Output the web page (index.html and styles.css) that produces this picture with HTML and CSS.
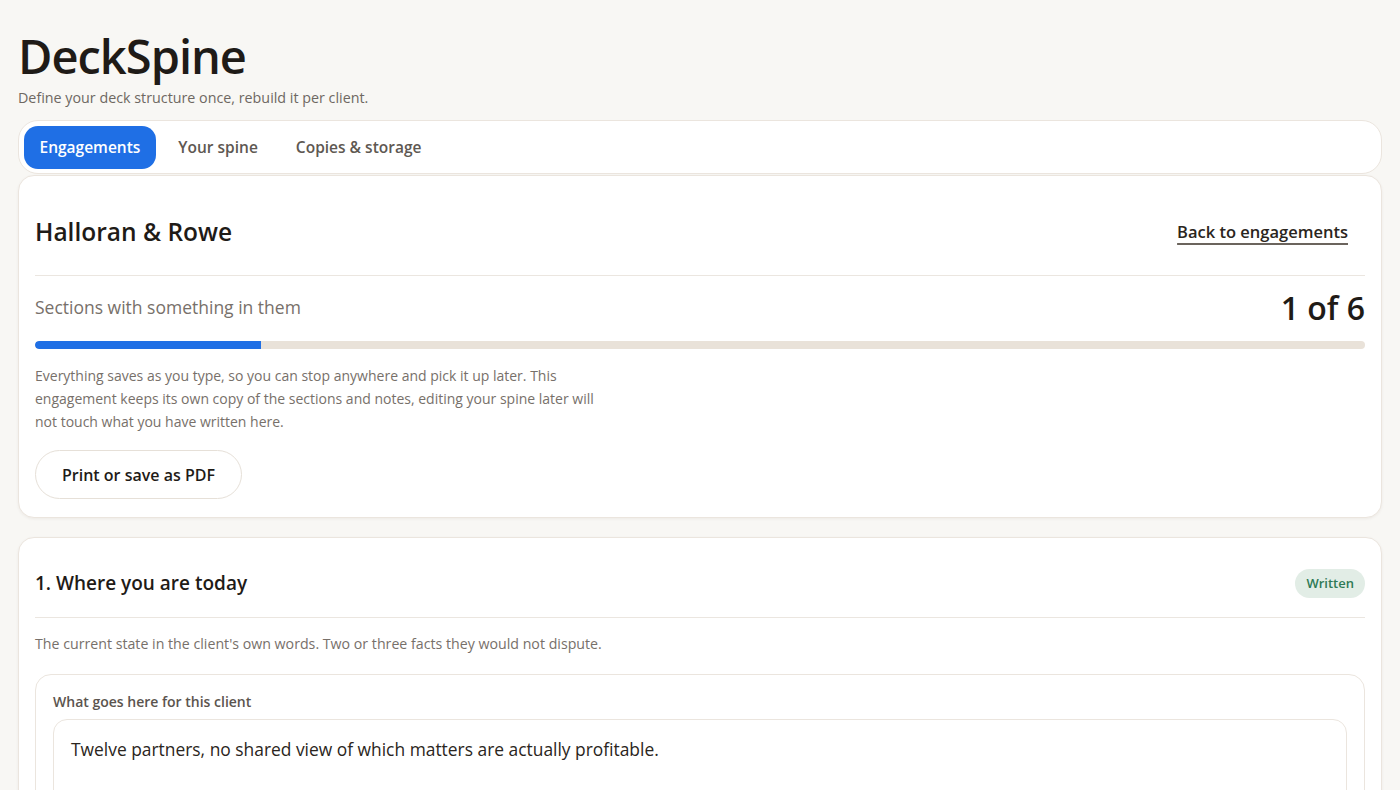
FILE: index.html
```html
<!DOCTYPE html>
<html>
  <head>
    <meta charset="UTF-8">
    <title>DeckSpine</title>
    <link rel="stylesheet" href="styles.css">
  </head>
  <body>
    <header class="masthead">
      <h1>DeckSpine</h1>
      <p class="tagline">Define your deck structure once, rebuild it per client.</p>
    </header>

    <nav class="tabs">
      <a class="tab active" href="#">Engagements</a>
      <a class="tab" href="#">Your spine</a>
      <a class="tab" href="#">Copies &amp; storage</a>
    </nav>

    <section class="card">
      <div class="card-head">
        <h2 class="client-name">Halloran &amp; Rowe</h2>
        <a class="back-link" href="#">Back to engagements</a>
      </div>

      <div class="progress-row">
        <span class="progress-label">Sections with something in them</span>
        <span class="progress-count">1 of 6</span>
      </div>
      <div class="progress-track">
        <div class="progress-fill" style="width: 17%"></div>
      </div>

      <p class="note">Everything saves as you type, so you can stop anywhere and pick it up later. This engagement keeps its own copy of the sections and notes, editing your spine later will not touch what you have written here.</p>

      <button class="pill-btn">Print or save as PDF</button>
    </section>

    <section class="card section-card">
      <div class="card-head section-head">
        <h3 class="section-title">1. Where you are today</h3>
        <span class="badge">Written</span>
      </div>
      <p class="section-desc">The current state in the client's own words. Two or three facts they would not dispute.</p>

      <div class="field-box">
        <label class="field-label" for="today">What goes here for this client</label>
        <textarea id="today" class="field-input" rows="4">Twelve partners, no shared view of which matters are actually profitable.</textarea>
      </div>
    </section>
  </body>
</html>
```

FILE: styles.css
```css
/* Page base */
body {
  margin: 0;
  padding: 18px 18px 40px;
  background-color: #f8f7f4;
  color: #1f1b17;
  font-family: "Open Sans", "Lato", sans-serif;
}

/* Title block */
.masthead h1 {
  margin: 0;
  padding-top: 10px;
  font-size: 47px;
  line-height: 56px;
  font-weight: 600;
  letter-spacing: -1px;
  color: #1f1b17;
}

.tagline {
  margin: 4px 0 0;
  font-size: 14.3px;
  line-height: 20px;
  color: #6e6862;
}

/* Tab bar */
.tabs {
  display: flex;
  gap: 6px;
  margin-top: 12px;
  padding: 4.5px;
  background-color: #fff;
  border: 1px solid #ebe5de;
  border-radius: 20px;
}

.tab {
  display: block;
  padding: 0 16px;
  height: 43px;
  line-height: 43px;
  border-radius: 14px;
  font-size: 15.5px;
  font-weight: 600;
  color: #5e5852;
  text-decoration: none;
}

.tab.active {
  background-color: #1f6fe5;
  color: #fff;
}

/* Cards */
.card {
  margin-top: 1px;
  padding: 0 16px 18px;
  background-color: #fff;
  border: 1px solid #ebe5de;
  border-radius: 16px;
  box-shadow: 0 1px 3px rgba(60, 40, 20, 0.06);
}

.card-head {
  display: flex;
  align-items: center;
  justify-content: space-between;
  height: 76px;
  padding-bottom: 6px;
  margin-top: 17px;
  border-bottom: 1px solid #ebe6e0;
}

.client-name {
  margin: 0;
  font-size: 24.5px;
  font-weight: 600;
  color: #1f1b17;
}

.back-link {
  margin-right: 17px;
  font-size: 16.5px;
  font-weight: 600;
  color: #2a2520;
  text-decoration: underline;
  text-decoration-color: #6b645d;
  text-decoration-thickness: 2px;
  text-underline-offset: 5px;
}

/* Progress */
.progress-row {
  display: flex;
  align-items: center;
  justify-content: space-between;
  margin-top: 13px;
  height: 36px;
}

.progress-label {
  font-size: 17.5px;
  color: #77706a;
}

.progress-count {
  font-size: 32px;
  font-weight: 600;
  color: #1f1b17;
}

.progress-track {
  margin-top: 16px;
  height: 8px;
  border-radius: 4px;
  background-color: #e9e2d9;
  overflow: hidden;
}

.progress-fill {
  height: 100%;
  background-color: #1f6fe5;
  border-radius: 4px 0 0 4px;
}

.note {
  margin: 15px 0 0;
  max-width: 575px;
  font-size: 14px;
  line-height: 23px;
  color: #77706a;
}

.pill-btn {
  display: block;
  margin-top: 17px;
  height: 49px;
  padding: 0 26px;
  background-color: #fff;
  border: 1px solid #e6e0d8;
  border-radius: 25px;
  font-family: inherit;
  font-size: 16px;
  font-weight: 600;
  color: #1f1b17;
  cursor: pointer;
}

/* Section cards */
.section-card {
  margin-top: 19px;
}

.section-head {
  height: 56px;
}

.section-title {
  margin: 0;
  font-size: 19px;
  font-weight: 600;
  color: #1f1b17;
}

.badge {
  display: inline-block;
  padding: 0 11px;
  height: 29px;
  line-height: 29px;
  border-radius: 15px;
  background-color: #e2ede6;
  color: #2f7a55;
  font-size: 13px;
  font-weight: 600;
}

.section-desc {
  margin: 15px 0 0;
  font-size: 14.2px;
  line-height: 22px;
  color: #77706a;
}

.field-box {
  margin-top: 19px;
  padding: 17px 17px 17px;
  border: 1px solid #ebe5de;
  border-radius: 16px;
}

.field-label {
  display: block;
  font-size: 14px;
  line-height: 20px;
  font-weight: 600;
  color: #5b544e;
}

.field-input {
  display: block;
  box-sizing: border-box;
  width: 100%;
  margin-top: 7px;
  padding: 16px 17px;
  border: 1px solid #ebe5de;
  border-radius: 14px;
  font-family: inherit;
  font-size: 17.4px;
  line-height: 26px;
  color: #2a2520;
  resize: vertical;
}
```
